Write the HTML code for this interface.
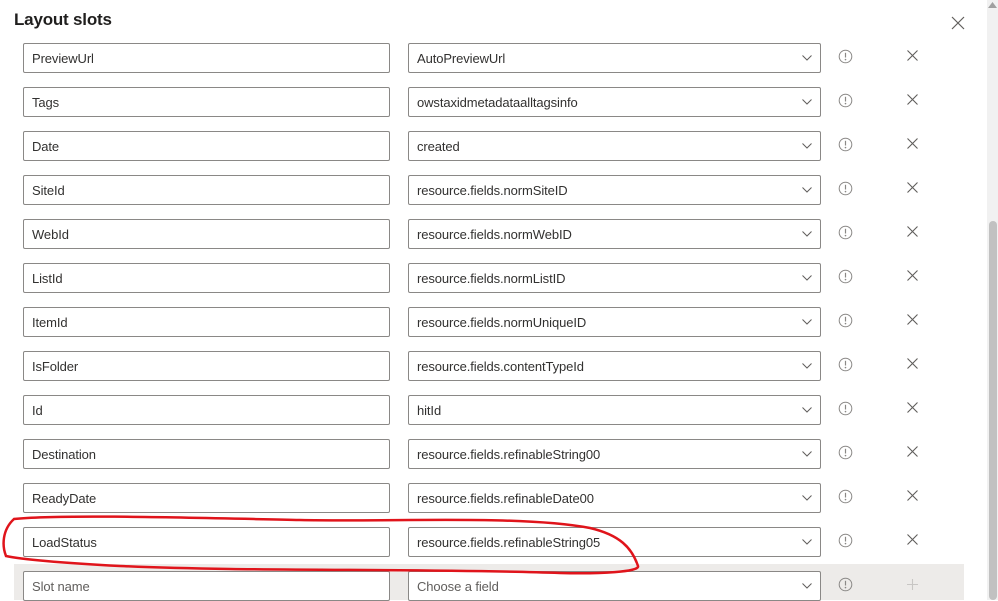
<!DOCTYPE html>
<html><head><meta charset="utf-8"><style>
*{box-sizing:border-box;margin:0;padding:0}
body{width:998px;height:600px;overflow:hidden;background:#fff;font-family:"Liberation Sans",sans-serif;position:relative;color:#323130}
h1{position:absolute;left:14px;top:10px;font-size:17px;font-weight:700;color:#201f1e;letter-spacing:-0.2px}
.x{position:absolute;font-size:0}
.in{position:absolute;height:30px;border:1px solid #8a8886;border-radius:2px;background:#fff;font-size:13px;line-height:29px;padding-left:8px;color:#323130;letter-spacing:-0.1px}
.ph{color:#605e5c}
.chev{position:absolute;right:8px;top:11px}
.sb{position:absolute;left:987px;top:0;width:11px;height:600px;background:#f1f1f1}
.th{position:absolute;left:989px;top:221px;width:8px;height:379px;background:#c1c1c1;border-radius:4px}
.gray{position:absolute;left:14px;top:564px;width:950px;height:36px;background:#edebe9}
</style></head><body>
<h1>Layout slots</h1>
<svg class="x" style="left:951px;top:16px" width="14" height="14"><path d="M1 1L13 13M13 1L1 13" stroke="#605e5c" stroke-width="1.2"/></svg>
<div class="sb"></div><div class="th"></div>
<svg style="position:absolute;left:988px;top:2px" width="9" height="6"><path d="M4.5 0L9 6H0Z" fill="#a0a0a0"/></svg>
<div class="gray"></div>
<div id="rows"></div>
<script>
var d=[["PreviewUrl","AutoPreviewUrl"],["Tags","owstaxidmetadataalltagsinfo"],["Date","created"],["SiteId","resource.fields.normSiteID"],["WebId","resource.fields.normWebID"],["ListId","resource.fields.normListID"],["ItemId","resource.fields.normUniqueID"],["IsFolder","resource.fields.contentTypeId"],["Id","hitId"],["Destination","resource.fields.refinableString00"],["ReadyDate","resource.fields.refinableDate00"],["LoadStatus","resource.fields.refinableString05"],["Slot name","Choose a field"]];
var h="";
d.forEach(function(r,i){var t=43+44*i;var p=i==12?" ph":"";
h+='<div class="in'+p+'" style="left:23px;top:'+t+'px;width:367px">'+r[0]+'</div>';
h+='<div class="in'+p+'" style="left:408px;top:'+t+'px;width:413px">'+r[1]+'<svg class="chev" width="10" height="6"><path d="M0.5 0.5L5 5L9.5 0.5" fill="none" stroke="#605e5c" stroke-width="1"/></svg></div>';
h+='<svg style="position:absolute;left:838px;top:'+(t+6)+'px" width="15" height="15"><circle cx="7.5" cy="7.5" r="6.3" fill="none" stroke="#8a8886" stroke-width="1"/><path d="M7.5 3.8V8.5" stroke="#8a8886" stroke-width="1.2"/><circle cx="7.5" cy="10.6" r="0.8" fill="#8a8886"/></svg>';
if(i<12)h+='<svg style="position:absolute;left:907px;top:'+(t+7)+'px" width="11" height="11"><path d="M0.5 0.5L10.5 10.5M10.5 0.5L0.5 10.5" stroke="#605e5c" stroke-width="1.1"/></svg>';
else h+='<svg style="position:absolute;left:907px;top:'+(t+8)+'px" width="11" height="11"><path d="M5.5 0V11M0 5.5H11" stroke="#c8c6c4" stroke-width="1.1"/></svg>';
});
document.getElementById("rows").innerHTML=h;
</script>
<svg style="position:absolute;left:0;top:0" width="998" height="600"><path d="M14 519C60 514 200 518 300 520C400 522 520 515 590 528C620 535 632 548 638 566C640 572 600 574 560 573C420 568 250 572 120 566C60 563 20 559 6 556C2 546 2 530 14 519" fill="none" stroke="#e0141b" stroke-width="2.5" stroke-linecap="round"/></svg>
</body></html>
